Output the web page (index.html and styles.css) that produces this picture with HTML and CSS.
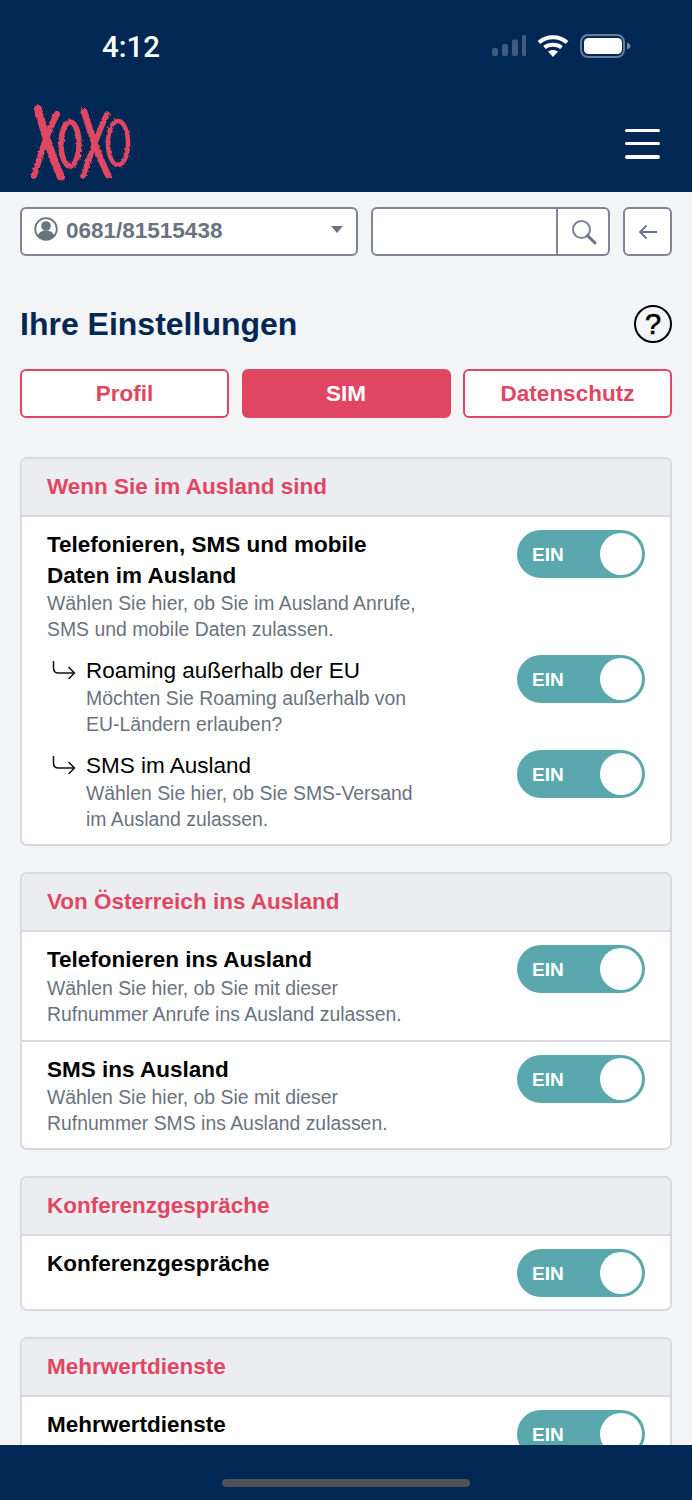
FILE: index.html
```html
<!DOCTYPE html>
<html lang="de">
<head>
<meta charset="utf-8">
<title>Ihre Einstellungen</title>
<link rel="stylesheet" href="styles.css">
</head>
<body>
<div class="app">
  <header class="header">
    <div class="status">
      <span class="time">4:12</span>
      <div class="status-icons">
        <svg class="signal" width="34" height="24" viewBox="0 0 34 24"><g fill="#fff" opacity=".24"><rect x="0" y="14" width="6" height="8" rx="2"/><rect x="10" y="10" width="6" height="12" rx="2"/><rect x="20" y="5.500" width="6" height="16.500" rx="2"/><rect x="30" y="1" width="6" height="21" rx="2"/></g></svg>
        <svg class="wifi" width="32" height="24" viewBox="0 0 32 24"><g fill="none" stroke="#fff" stroke-width="4"><path d="M2 8.500C9.500 1.500 22.500 1.500 30 8.500"/><path d="M7.500 13.500C12 9.800 20 9.800 24.500 13.500"/></g><path d="M11 17.500C13.800 15.400 18.200 15.400 21 17.500L16 23Z" fill="#fff"/></svg>
        <svg class="battery" width="51" height="24" viewBox="0 0 51 24"><rect x="1" y="1" width="43" height="22" rx="7" fill="none" stroke="#fff" stroke-opacity=".4" stroke-width="2"/><rect x="4" y="4" width="38" height="16" rx="4.500" fill="#fff"/><path d="M47 8.500c2.500.8 3.500 2 3.500 3.500s-1 2.700-3.500 3.500z" fill="#fff" fill-opacity=".45"/></svg>
      </div>
    </div>
    <div class="navbar">
      <svg class="logo" width="160" height="100" viewBox="0 0 160 100" role="img" aria-label="XOXO">
        <defs>
          <filter id="rough" x="-10%" y="-10%" width="120%" height="120%">
            <feTurbulence type="fractalNoise" baseFrequency="0.35" numOctaves="2" seed="4"/>
            <feDisplacementMap in="SourceGraphic" scale="3"/>
          </filter>
        </defs>
        <g fill="none" stroke="#e04662" stroke-linecap="round" filter="url(#rough)">
          <path d="M38 18C43 36 50 62 61 86" stroke-width="8"/>
          <path d="M57 23C47 42 41 62 34 85" stroke-width="6"/>
          <ellipse cx="70" cy="53" rx="9" ry="22" stroke-width="5.500"/>
          <path d="M84 20C90 40 97 62 108 84" stroke-width="6.500"/>
          <path d="M107 23C98 42 91 62 83 85" stroke-width="5.500"/>
          <ellipse cx="118" cy="52" rx="10" ry="22" stroke-width="4.500"/>
        </g>
      </svg>
      <button class="menu" aria-label="Menü"><span></span><span></span><span></span></button>
    </div>
  </header>

  <main class="main">
    <div class="toolbar">
      <div class="select">
        <svg class="person" width="24" height="24" viewBox="0 0 24 24"><circle cx="12" cy="12" r="10.800" fill="none" stroke="#6b7280" stroke-width="1.800"/><circle cx="12" cy="9" r="4.800" fill="#6b7280"/><path d="M3.800 19c1-4 4.500-5.500 8.200-5.500s7.200 1.500 8.200 5.500c-2 2.600-5 4-8.200 4s-6.200-1.400-8.200-4z" fill="#6b7280"/></svg>
        <span class="select-value">0681/81515438</span>
        <span class="caret"></span>
      </div>
      <div class="search">
        <div class="search-field"></div>
        <div class="search-btn">
          <svg width="26" height="26" viewBox="0 0 26 26"><circle cx="10.500" cy="10.500" r="8.500" fill="none" stroke="#7b8290" stroke-width="2"/><path d="M16.500 16.500L24 24" stroke="#6b7280" stroke-width="3" stroke-linecap="round"/></svg>
        </div>
      </div>
      <button class="back" aria-label="Zurück">
        <svg width="20" height="16" viewBox="0 0 20 16"><path d="M19 8H2M8.500 1.500L2 8l6.500 6.500" fill="none" stroke="#6b7280" stroke-width="1.800"/></svg>
      </button>
    </div>

    <div class="title-row">
      <h1 class="title">Ihre Einstellungen</h1>
      <span class="help">?</span>
    </div>

    <nav class="tabs">
      <a class="tab">Profil</a>
      <a class="tab tab-active">SIM</a>
      <a class="tab">Datenschutz</a>
    </nav>

    <section class="card">
      <h2 class="card-head">Wenn Sie im Ausland sind</h2>
      <div class="row row-stack">
        <div class="item">
          <div class="item-text">
            <div class="item-title">Telefonieren, SMS und mobile<br>Daten im Ausland</div>
            <div class="item-desc">Wählen Sie hier, ob Sie im Ausland Anrufe,<br>SMS und mobile Daten zulassen.</div>
          </div>
          <div class="toggle"><span>EIN</span><i></i></div>
        </div>
        <div class="item">
          <div class="sub">
            <svg class="sub-arrow" width="24" height="18" viewBox="0 0 24 18"><path d="M1.500 0v7c0 3 1.500 5 5 5h16M16.500 6l6 6-6 6" fill="none" stroke="#111" stroke-width="1.500"/></svg>
            <div class="item-text">
              <div class="item-subtitle">Roaming außerhalb der EU</div>
              <div class="item-desc">Möchten Sie Roaming außerhalb von<br>EU-Ländern erlauben?</div>
            </div>
          </div>
          <div class="toggle"><span>EIN</span><i></i></div>
        </div>
        <div class="item">
          <div class="sub">
            <svg class="sub-arrow" width="24" height="18" viewBox="0 0 24 18"><path d="M1.500 0v7c0 3 1.500 5 5 5h16M16.500 6l6 6-6 6" fill="none" stroke="#111" stroke-width="1.500"/></svg>
            <div class="item-text">
              <div class="item-subtitle">SMS im Ausland</div>
              <div class="item-desc">Wählen Sie hier, ob Sie SMS-Versand<br>im Ausland zulassen.</div>
            </div>
          </div>
          <div class="toggle"><span>EIN</span><i></i></div>
        </div>
      </div>
    </section>

    <section class="card">
      <h2 class="card-head">Von Österreich ins Ausland</h2>
      <div class="row row-first">
        <div class="item">
          <div class="item-text">
            <div class="item-title">Telefonieren ins Ausland</div>
            <div class="item-desc">Wählen Sie hier, ob Sie mit dieser<br>Rufnummer Anrufe ins Ausland zulassen.</div>
          </div>
          <div class="toggle"><span>EIN</span><i></i></div>
        </div>
      </div>
      <div class="row row-line">
        <div class="item">
          <div class="item-text">
            <div class="item-title">SMS ins Ausland</div>
            <div class="item-desc">Wählen Sie hier, ob Sie mit dieser<br>Rufnummer SMS ins Ausland zulassen.</div>
          </div>
          <div class="toggle"><span>EIN</span><i></i></div>
        </div>
      </div>
    </section>

    <section class="card">
      <h2 class="card-head">Konferenzgespräche</h2>
      <div class="row">
        <div class="item">
          <div class="item-text">
            <div class="item-title">Konferenzgespräche</div>
          </div>
          <div class="toggle"><span>EIN</span><i></i></div>
        </div>
      </div>
    </section>

    <section class="card">
      <h2 class="card-head">Mehrwertdienste</h2>
      <div class="row">
        <div class="item">
          <div class="item-text">
            <div class="item-title">Mehrwertdienste</div>
          </div>
          <div class="toggle"><span>EIN</span><i></i></div>
        </div>
      </div>
    </section>
  </main>

  <footer class="footer"><span class="home-bar"></span></footer>
</div>
</body>
</html>
```
FILE: styles.css
```css
* { box-sizing: border-box; }
html, body { margin: 0; padding: 0; }
body { font-family: "Liberation Sans", Arial, sans-serif; background: #f3f4f6; color: #000; }
.app { width: 692px; height: 1500px; display: flex; flex-direction: column; overflow: hidden; }

.header { height: 192px; flex: none; background: #012854; }
.status { height: 94px; padding: 31px 61px 0 102px; display: flex; justify-content: space-between; align-items: flex-start; }
.time { font-family: Roboto, sans-serif; font-weight: 500; font-size: 29.500px; line-height: 32px; color: #fff; }
.status-icons { display: flex; align-items: center; gap: 0; padding-top: 3px; }
.signal { margin-right: 11px; }
.wifi { margin-right: 11px; }
.navbar { height: 98px; display: flex; justify-content: space-between; align-items: center; position: relative; padding: 0 32px 0 0; }
.logo { display: block; margin-top: -2px; margin-bottom: 2px; }
.menu { width: 35px; height: 30px; padding: 0; background: none; border: 0; display: flex; flex-direction: column; justify-content: space-between; margin-top: 1px; }
.menu span { display: block; height: 3.500px; border-radius: 2px; background: #fff; }

.main { flex: 1; min-height: 0; overflow: hidden; padding: 15px 20px 0; }

.toolbar { display: flex; gap: 13px; height: 49px; }
.select { width: 339px; display: flex; align-items: center; background: #fff; border: 2px solid #7f8592; border-radius: 6px; padding: 0 13px 2px 12px; }
.person { flex: none; margin-top: -3px; }
.select-value { margin-left: 8px; flex: 1; font-size: 22.500px; font-weight: 700; color: #6b7280; }
.caret { width: 0; height: 0; border-left: 6.500px solid transparent; border-right: 6.500px solid transparent; border-top: 7px solid #6b7280; margin-top: -2px; }
.search { width: 239px; display: flex; background: #fff; border: 2px solid #7f8592; border-radius: 6px; }
.search-field { flex: 1; }
.search-btn { width: 52px; border-left: 2px solid #7f8592; display: flex; align-items: center; justify-content: center; padding-left: 1px; }
.back { width: 49px; padding: 0; display: flex; align-items: center; justify-content: center; background: #fff; border: 2px solid #7f8592; border-radius: 6px; }

.title-row { display: flex; justify-content: space-between; align-items: center; margin-top: 49px; height: 38px; }
.title { margin: 0; font-size: 32px; line-height: 38px; font-weight: 700; color: #012854; }
.help { width: 38px; height: 38px; border: 2.500px solid #000; border-radius: 50%; display: flex; align-items: center; justify-content: center; font-size: 29px; font-weight: 400; color: #000; -webkit-text-stroke: 0.6px #000; }

.tabs { display: flex; gap: 12.500px; margin-top: 26px; }
.tab { flex: 1; height: 49px; display: flex; align-items: center; justify-content: center; background: #fff; border: 2px solid #e04662; border-radius: 6px; font-size: 22.500px; font-weight: 700; color: #e04662; }
.tab-active { background: #e04662; color: #fff; }

.card { margin-top: 26px; background: #fff; border: 2px solid #d8dae2; border-radius: 7px; overflow: hidden; }
.tabs + .card { margin-top: 39px; }
.card-head { margin: 0; height: 58px; display: flex; align-items: center; padding: 0 25px; background: #ecedf1; border-bottom: 2px solid #d8dae2; font-size: 22.500px; font-weight: 700; color: #e04662; }

.row { padding: 13px 25px 12px; }
.row-first { padding-bottom: 13px; }
.row-line { border-top: 2px solid #d8dae2; padding-bottom: 12px; }
.row-line .item-title { margin-bottom: -1px; }
.row-stack { display: flex; flex-direction: column; gap: 13px; }
.row-stack .item-title { margin-bottom: -1px; }
.item { display: flex; justify-content: space-between; align-items: flex-start; }
.sub { display: flex; }
.sub-arrow { flex: none; margin: 6px 10px 0 5px; }
.item-title { font-size: 22.500px; line-height: 31px; font-weight: 700; color: #000; margin-top: -1px; }
.item-subtitle { font-size: 22.500px; line-height: 31px; margin-bottom: -1px; color: #000; }
.item-desc { font-size: 19.400px; line-height: 26px; color: #6b7280; }

.toggle { flex: none; width: 128px; height: 48px; border-radius: 24px; background: #5aa8ae; display: flex; align-items: center; justify-content: space-between; padding: 0 3px 0 15px; color: #fff; }
.toggle span { font-size: 19px; font-weight: 700; padding-top: 2px; }
.toggle i { display: block; width: 42px; height: 42px; border-radius: 50%; background: #fff; }

.footer { height: 55px; flex: none; background: #012854; display: flex; justify-content: center; padding-top: 34px; }
.home-bar { width: 248px; height: 8px; border-radius: 4px; background: #4f5257; }
```
